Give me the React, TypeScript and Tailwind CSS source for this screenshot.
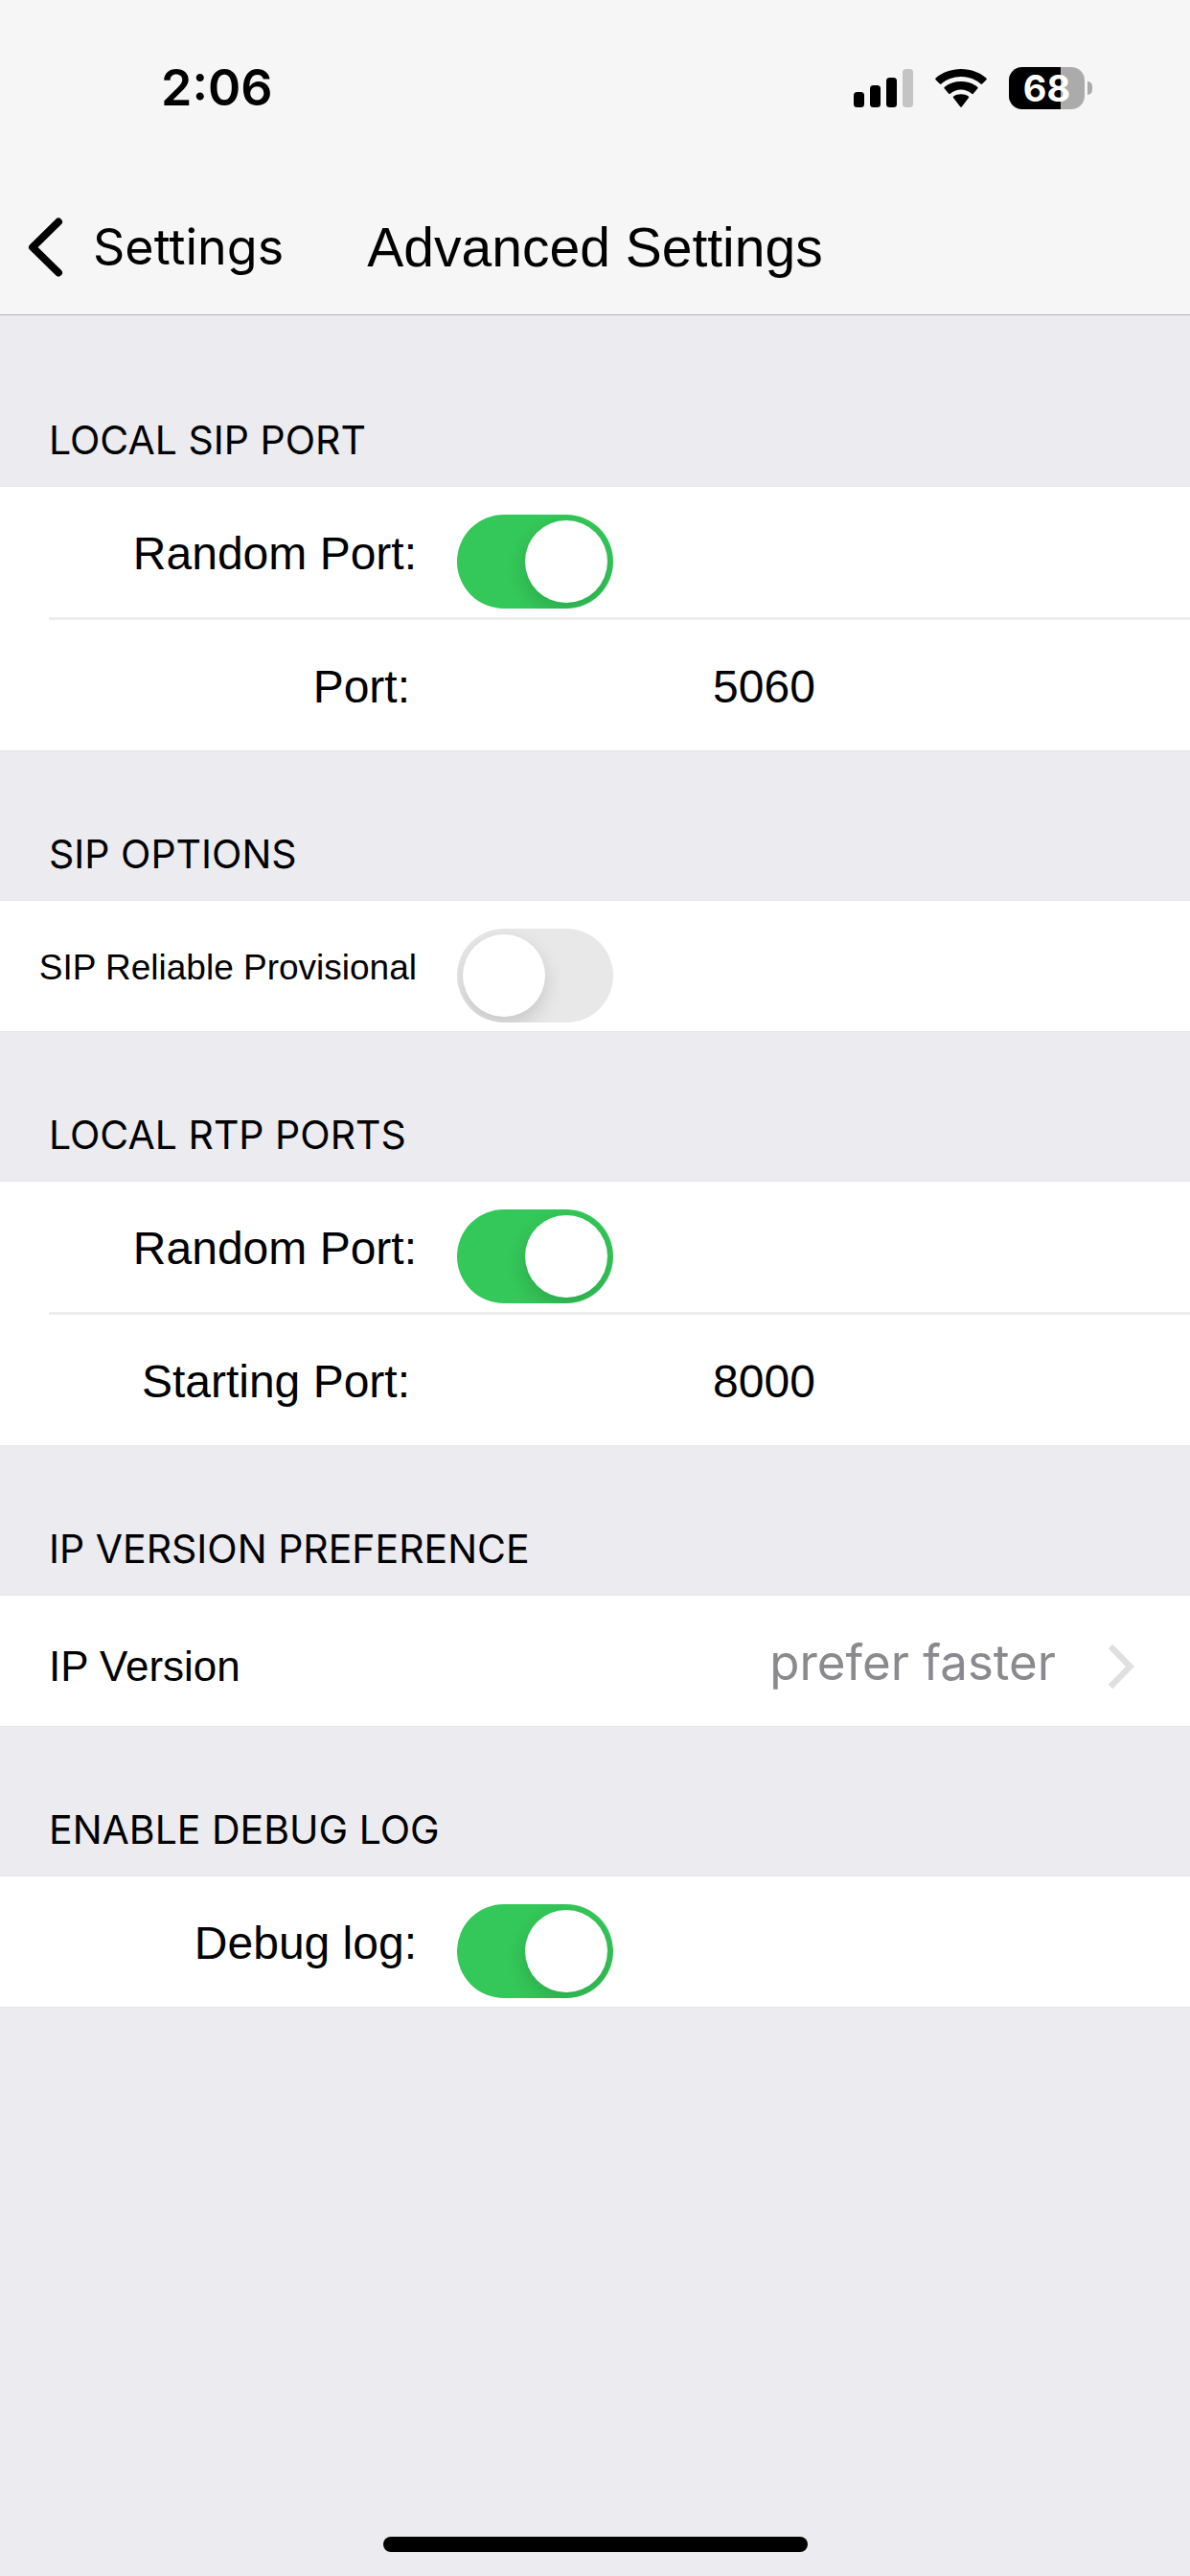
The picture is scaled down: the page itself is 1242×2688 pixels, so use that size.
import React, { useState } from "react";

interface SwitchRowProps {
  id: string;
  label: string;
  defaultOn?: boolean;
  small?: boolean;
}

interface PortRowProps {
  id: string;
  label: string;
  defaultPort: string;
}

interface SectionProps {
  title: string;
  children: React.ReactNode;
}

function SignalIcon() {
  return (
    <svg className="w-[62px] h-10" viewBox="0 0 62 40" aria-hidden="true">
      <rect x="0" y="24" width="11" height="16" rx="3.5" />
      <rect x="17" y="17" width="11" height="23" rx="3.5" />
      <rect x="34" y="9" width="11" height="31" rx="3.5" />
      <rect x="51" y="0" width="11" height="40" rx="3.5" fill="#c4c4c4" />
    </svg>
  );
}

function WifiIcon() {
  return (
    <svg className="w-[54px] h-10" viewBox="0 0 54 40" aria-hidden="true">
      <path d="M0.6 11.2a1.2 1.2 0 0 1 0-1.7C7.6 3.5 17 0 27 0s19.4 3.5 26.4 9.5a1.2 1.2 0 0 1 0 1.7l-4.2 4.2a1.2 1.2 0 0 1-1.6 0C42 10.8 34.8 8 27 8S12 10.8 6.4 15.4a1.2 1.2 0 0 1-1.6 0z" />
      <path d="M9.8 20.4a1.2 1.2 0 0 1 0-1.7C14.4 15 20.4 13 27 13s12.6 2 17.2 5.7a1.2 1.2 0 0 1 0 1.7L39.8 25.8a1.2 1.2 0 0 1-1.6 0C35.2 23 31.4 21.4 27 21.4S18.8 23 15.8 25.8a1.2 1.2 0 0 1-1.6 0z" />
      <path d="M19.2 30.2a1.2 1.2 0 0 1 0-1.7C21.3 27 24 26.2 27 26.2s5.7.8 7.8 2.3a1.2 1.2 0 0 1 0 1.7L27.9 39.3a1.2 1.2 0 0 1-1.8 0z" />
    </svg>
  );
}

function Battery({ level }: { level: number }) {
  return (
    <div className="flex items-center gap-[3px]">
      <div className="relative flex h-11 w-[79px] items-center justify-center overflow-hidden rounded-[14px] bg-[#ababab]">
        <div
          className="absolute inset-y-0 left-0 bg-black"
          style={{ width: `${level}%` }}
        />
        <span className="relative text-[38px] leading-[44px] font-bold text-white">
          {level}
        </span>
      </div>
      <div className="h-[14px] w-[5px] rounded-r-full bg-[#ababab]" />
    </div>
  );
}

function StatusBar() {
  return (
    <div className="flex h-[188px] items-center justify-between pr-[102px] pb-1 pl-[168px] font-['Inter',sans-serif]">
      <span className="text-[52px] leading-[60px] font-semibold">2:06</span>
      <div className="flex items-center gap-[23px]">
        <SignalIcon />
        <WifiIcon />
        <Battery level={68} />
      </div>
    </div>
  );
}

function NavBar() {
  return (
    <nav className="grid h-[140px] grid-cols-[1fr_auto_1fr] items-center">
      <button
        type="button"
        className="flex items-center gap-[31px] pl-[29px] font-['Inter',sans-serif] text-[52px] leading-[60px]"
      >
        <svg
          className="h-[62px] w-[37px]"
          viewBox="0 0 37 62"
          fill="none"
          stroke="currentColor"
          strokeWidth="8"
          strokeLinecap="round"
          strokeLinejoin="round"
          aria-hidden="true"
        >
          <path d="M32 4.500L5 31l27 26.500" />
        </svg>
        Settings
      </button>
      <h1 className="text-[57px] leading-[64px]">Advanced Settings</h1>
    </nav>
  );
}

function Section({ title, children }: SectionProps) {
  return (
    <section>
      <h2 className="flex h-[155px] items-end pb-6 pl-[51px] font-['Inter',sans-serif] text-[41px] leading-[48px]">
        {title}
      </h2>
      <div className="border-y border-[#e6e6e9] bg-white">{children}</div>
    </section>
  );
}

function Divider() {
  return <div className="ml-[51px] h-[3px] bg-[#ededee]" />;
}

function SwitchRow({ id, label, defaultOn = false, small }: SwitchRowProps) {
  const [on, setOn] = useState(defaultOn);

  return (
    <div className="flex h-[136px] items-center gap-[42px]">
      <label
        htmlFor={id}
        className={`w-[435px] pt-1 text-right whitespace-nowrap ${
          small ? "text-[37px]" : "text-[48px]"
        }`}
      >
        {label}
      </label>
      <input
        id={id}
        type="checkbox"
        role="switch"
        checked={on}
        onChange={(e) => setOn(e.target.checked)}
        className="mt-5 flex h-[98px] w-[163px] appearance-none items-center overflow-hidden rounded-full bg-[#e8e8e8] px-[6px] before:size-[86px] before:rounded-full before:bg-white before:shadow-[0_8px_20px_rgba(0,0,0,0.15)] checked:justify-end checked:bg-[#34c759]"
      />
    </div>
  );
}

function PortRow({ id, label, defaultPort }: PortRowProps) {
  const [port, setPort] = useState(defaultPort);

  return (
    <div className="flex h-[136px] items-center pt-1 text-[48px]">
      <label htmlFor={id} className="w-[428px] text-right whitespace-nowrap">
        {label}
      </label>
      <input
        id={id}
        type="text"
        inputMode="numeric"
        value={port}
        onChange={(e) => setPort(e.target.value)}
        className="mr-[75px] min-w-0 flex-1 text-center"
      />
    </div>
  );
}

function LinkRow({ label, value }: { label: string; value: string }) {
  return (
    <a
      href="#ip-version"
      className="flex h-[136px] items-center justify-between pt-1 pr-[58px] pl-[51px]"
    >
      <span className="pt-2 text-[44px]">{label}</span>
      <span className="flex items-center gap-[54px] font-['Inter',sans-serif] text-[51px] text-[#8a8a8e]">
        {value}
        <svg
          className="mt-2 h-[48px] w-[28px]"
          viewBox="0 0 28 48"
          fill="none"
          stroke="#e0e0e0"
          strokeWidth="6.500"
          aria-hidden="true"
        >
          <path d="M3 3l20.500 21L3 45" />
        </svg>
      </span>
    </a>
  );
}

function App() {
  return (
    <div className="flex min-h-screen flex-col bg-[#ebebf0] font-['Liberation_Sans',Arial,sans-serif] text-black">
      <header className="border-b border-[#b2b2b4] bg-[#f6f6f6]">
        <StatusBar />
        <NavBar />
      </header>

      <main className="pt-[23px]">
        <Section title="LOCAL SIP PORT">
          <SwitchRow id="sip-random" label="Random Port:" defaultOn />
          <Divider />
          <PortRow id="sip-port" label="Port:" defaultPort="5060" />
        </Section>
        <Section title="SIP OPTIONS">
          <SwitchRow id="sip-reliable" label="SIP Reliable Provisional" small />
        </Section>
        <Section title="LOCAL RTP PORTS">
          <SwitchRow id="rtp-random" label="Random Port:" defaultOn />
          <Divider />
          <PortRow id="rtp-port" label="Starting Port:" defaultPort="8000" />
        </Section>
        <Section title="IP VERSION PREFERENCE">
          <LinkRow label="IP Version" value="prefer faster" />
        </Section>
        <Section title="ENABLE DEBUG LOG">
          <SwitchRow id="debug-log" label="Debug log:" defaultOn />
        </Section>
      </main>

      <div className="mx-auto mt-auto mb-[25px] h-4 w-[443px] rounded-full bg-black" />
    </div>
  );
}

export default App;
